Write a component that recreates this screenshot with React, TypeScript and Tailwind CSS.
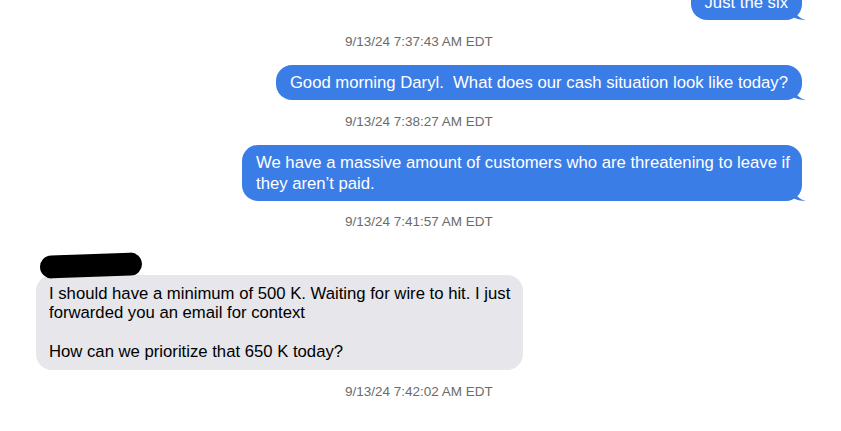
import React from "react";

function Tail() {
  return (
    <svg
      className="absolute right-[-5px] bottom-0"
      width="14"
      height="12"
      viewBox="0 0 14 12"
    >
      <path d="M0 0 C2 6 6 10 13 12 C8 12 3 11 0 9 Z" fill="#3b7de6" />
    </svg>
  );
}

function Stamp({ text, className }: { text: string; className?: string }) {
  return (
    <div
      className={`pl-[345px] text-[13.5px] leading-[15px] text-[#6b6b6b] ${className ?? ""}`}
    >
      {text}
    </div>
  );
}

function Outgoing({
  children,
  className,
}: {
  children: React.ReactNode;
  className?: string;
}) {
  return (
    <div className={`flex justify-end pr-[39px] ${className ?? ""}`}>
      <div className="relative rounded-[16px] bg-[#3b7de6] text-white">
        {children}
        <Tail />
      </div>
    </div>
  );
}

export default function App() {
  return (
    <div
      className="h-[431px] w-[841px] overflow-hidden bg-white"
      style={{ fontFamily: '"Liberation Sans", Arial, sans-serif' }}
    >
      <div className="flex flex-col">
        <Outgoing className="mt-[-15px]">
          <div className="px-[14px] py-[8px] text-[16.7px] leading-[19px]">
            Just the six
          </div>
        </Outgoing>

        <Stamp text="9/13/24 7:37:43 AM EDT" className="mt-[14px]" />

        <Outgoing className="mt-[16px]">
          <div className="whitespace-pre px-[14px] py-[8px] text-[16.7px] leading-[19px]">
            Good morning Daryl.  What does our cash situation look like today?
          </div>
        </Outgoing>

        <Stamp text="9/13/24 7:38:27 AM EDT" className="mt-[14px]" />

        <Outgoing className="mt-[16px]">
          <div className="w-[560px] py-[7px] pr-[8px] pl-[14px] text-[16.7px] leading-[21px]">
            We have a massive amount of customers who are threatening to leave
            if they aren’t paid.
          </div>
        </Outgoing>

        <Stamp text="9/13/24 7:41:57 AM EDT" className="mt-[13px]" />

        <div className="relative z-10 mt-[25px] ml-[40px] h-[23px] w-[102px] -rotate-2 rounded-full bg-black" />

        <div className="mt-[-2px] ml-[36px] w-[487px] rounded-[16px] bg-[#e6e6eb] py-[8.5px] pr-[8px] pl-[13px] text-[16.7px] leading-[19.5px] text-black">
          <p>
            I should have a minimum of 500 K. Waiting for wire to hit. I just
            forwarded you an email for context
          </p>
          <p>&nbsp;</p>
          <p>How can we prioritize that 650 K today?</p>
        </div>

        <Stamp text="9/13/24 7:42:02 AM EDT" className="mt-[14px]" />
      </div>
    </div>
  );
}
